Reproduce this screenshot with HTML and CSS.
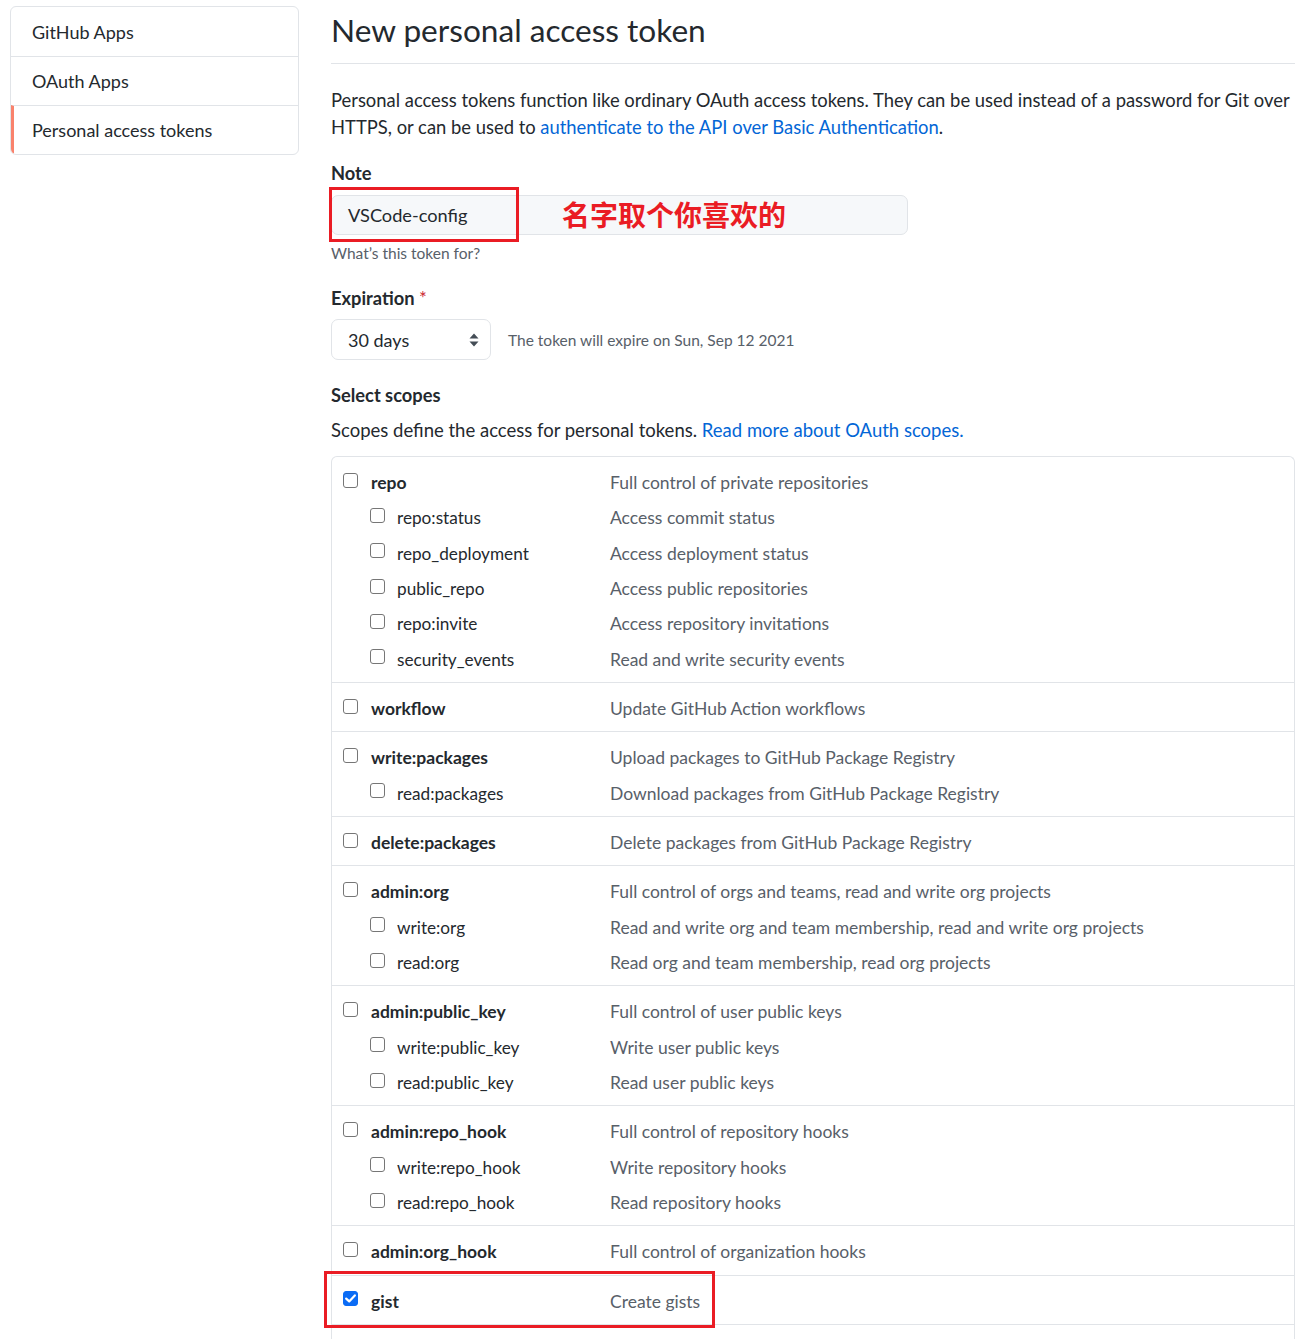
FILE: index.html
```html
<!DOCTYPE html>
<html lang="en">
<head>
<meta charset="utf-8">
<title>New personal access token</title>
<link rel="stylesheet" href="styles.css">
</head>
<body>
<div class="page">
  <nav class="sidebar">
    <a class="side-item">GitHub Apps</a>
    <a class="side-item">OAuth Apps</a>
    <a class="side-item active">Personal access tokens</a>
  </nav>
  <main class="main">
    <div class="subhead"><h2 class="title">New personal access token</h2></div>
    <p class="intro">Personal access tokens function like ordinary OAuth access tokens. They can be used instead of a password for Git over HTTPS, or can be used to <a class="link">authenticate to the API over Basic Authentication</a>.</p>

    <div class="field">
      <div class="label">Note</div>
      <div class="note-wrap">
        <div class="input">VSCode-config</div>
        <div class="annot-box"></div>
        <div class="annot-text">名字取个你喜欢的</div>
      </div>
      <div class="hint">What’s this token for?</div>
    </div>

    <div class="field">
      <div class="label">Expiration <span class="req">*</span></div>
      <div class="exp-row">
        <div class="select">30 days
          <svg class="arrows" width="10" height="14" viewBox="0 0 10 14"><path d="M5 0.5 L9.5 5.5 H0.5 Z M5 13.5 L9.5 8.5 H0.5 Z" fill="#444d56"/></svg>
        </div>
        <div class="exp-note">The token will expire on Sun, Sep 12 2021</div>
      </div>
    </div>

    <div class="label scopes-label">Select scopes</div>
    <p class="scopes-desc">Scopes define the access for personal tokens. <a class="link">Read more about OAuth scopes.</a></p>

    <div class="scopes">
      <div class="group">
        <div class="row"><span class="cb"></span><span class="name">repo</span><span class="desc">Full control of private repositories</span></div>
        <div class="row sub"><span class="cb"></span><span class="sname">repo:status</span><span class="desc">Access commit status</span></div>
        <div class="row sub"><span class="cb"></span><span class="sname">repo_deployment</span><span class="desc">Access deployment status</span></div>
        <div class="row sub"><span class="cb"></span><span class="sname">public_repo</span><span class="desc">Access public repositories</span></div>
        <div class="row sub"><span class="cb"></span><span class="sname">repo:invite</span><span class="desc">Access repository invitations</span></div>
        <div class="row sub"><span class="cb"></span><span class="sname">security_events</span><span class="desc">Read and write security events</span></div>
      </div>
      <div class="group">
        <div class="row"><span class="cb"></span><span class="name">workflow</span><span class="desc">Update GitHub Action workflows</span></div>
      </div>
      <div class="group">
        <div class="row"><span class="cb"></span><span class="name">write:packages</span><span class="desc">Upload packages to GitHub Package Registry</span></div>
        <div class="row sub"><span class="cb"></span><span class="sname">read:packages</span><span class="desc">Download packages from GitHub Package Registry</span></div>
      </div>
      <div class="group">
        <div class="row"><span class="cb"></span><span class="name">delete:packages</span><span class="desc">Delete packages from GitHub Package Registry</span></div>
      </div>
      <div class="group">
        <div class="row"><span class="cb"></span><span class="name">admin:org</span><span class="desc">Full control of orgs and teams, read and write org projects</span></div>
        <div class="row sub"><span class="cb"></span><span class="sname">write:org</span><span class="desc">Read and write org and team membership, read and write org projects</span></div>
        <div class="row sub"><span class="cb"></span><span class="sname">read:org</span><span class="desc">Read org and team membership, read org projects</span></div>
      </div>
      <div class="group">
        <div class="row"><span class="cb"></span><span class="name">admin:public_key</span><span class="desc">Full control of user public keys</span></div>
        <div class="row sub"><span class="cb"></span><span class="sname">write:public_key</span><span class="desc">Write user public keys</span></div>
        <div class="row sub"><span class="cb"></span><span class="sname">read:public_key</span><span class="desc">Read user public keys</span></div>
      </div>
      <div class="group">
        <div class="row"><span class="cb"></span><span class="name">admin:repo_hook</span><span class="desc">Full control of repository hooks</span></div>
        <div class="row sub"><span class="cb"></span><span class="sname">write:repo_hook</span><span class="desc">Write repository hooks</span></div>
        <div class="row sub"><span class="cb"></span><span class="sname">read:repo_hook</span><span class="desc">Read repository hooks</span></div>
      </div>
      <div class="group">
        <div class="row"><span class="cb"></span><span class="name">admin:org_hook</span><span class="desc">Full control of organization hooks</span></div>
      </div>
      <div class="group gist">
        <div class="row"><span class="cb checked"><svg width="11" height="9" viewBox="0 0 11 9"><path d="M1.2 4.6 L4.2 7.4 L9.8 1.4" fill="none" stroke="#fff" stroke-width="2.2" stroke-linecap="round" stroke-linejoin="round"/></svg></span><span class="name">gist</span><span class="desc">Create gists</span></div>
        <div class="annot-box gist-box"></div>
      </div>
      <div class="tail"></div>
    </div>
  </main>
</div>
</body>
</html>
```

FILE: styles.css
```css
* { box-sizing: border-box; }
body {
  margin: 0;
  font-family: "Lato", "Noto Sans", "Liberation Sans", sans-serif;
  font-size: 17.5px;
  color: #24292e;
  background: #fff;
}
.page {
  display: flex;
  align-items: flex-start;
  padding: 6px 0 0 10px;
}
.sidebar {
  width: 289px;
  flex: none;
  border: 1px solid #e1e4e8;
  border-radius: 6px;
  overflow: hidden;
  display: flex;
  flex-direction: column;
}
.side-item {
  height: 49px;
  display: flex;
  align-items: center;
  padding-left: 21px;
  color: #24292e;
  font-size: 18px;
  border-top: 1px solid #e1e4e8;
}
.side-item:first-child { border-top: none; }
.side-item.active {
  border-left: 3px solid #f9826c;
  padding-left: 18px;
}
.main {
  margin-left: 32px;
  width: 964px;
  flex: none;
}
.subhead {
  border-bottom: 1px solid #e1e4e8;
  padding: 5px 0 14px;
}
.title {
  margin: 0;
  font-size: 31.6px;
  font-weight: 400;
  line-height: 38px;
}
.intro {
  margin: 23px 0 0;
  line-height: 27px;
  font-size: 18.4px;
}
.link { color: #0366d6; text-decoration: none; }
.field { margin-top: 20px; }
.label {
  font-weight: 700;
  font-size: 18.3px;
  line-height: 24px;
}
.req { color: #cb2431; font-weight: 400; }
.note-wrap {
  position: relative;
  margin-top: 10px;
  width: 577px;
}
.input {
  height: 40px;
  background: #f6f8fa;
  border: 1px solid #e1e4e8;
  border-radius: 7px;
  padding: 0 16px;
  display: flex;
  align-items: center;
  font-size: 18.2px;
}
.annot-box {
  position: absolute;
  border: 3px solid #ea1c24;
}
.note-wrap .annot-box {
  left: -2px;
  top: -8px;
  width: 190px;
  height: 55px;
}
.annot-text {
  position: absolute;
  left: 231px;
  top: -1px;
  height: 40px;
  display: flex;
  align-items: center;
  font-family: "Noto Sans CJK SC", sans-serif;
  font-weight: 700;
  font-size: 28px;
  color: #ea1c24;
}
.hint {
  margin-top: 8px;
  font-size: 15.5px;
  color: #586069;
  line-height: 20px;
}
.field + .field { margin-top: 23px; }
.exp-row {
  display: flex;
  align-items: center;
  margin-top: 9px;
  gap: 17px;
}
.select {
  width: 160px;
  height: 41px;
  border: 1px solid #e1e4e8;
  border-radius: 7px;
  display: flex;
  align-items: center;
  justify-content: space-between;
  padding: 0 11px 0 16px;
  font-size: 18px;
}
.exp-note {
  font-size: 15.5px;
  color: #586069;
}
.scopes-label { margin-top: 23px; }
.scopes-desc {
  margin: 11px 0 0;
  line-height: 24px;
  font-size: 18.5px;
}
.scopes {
  margin-top: 14px;
  border: 1px solid #e1e4e8;
  border-bottom: none;
  border-radius: 6px 6px 0 0;
}
.group {
  position: relative;
  padding: 8px 0 5px;
  border-bottom: 1px solid #e1e4e8;
}
.row {
  display: grid;
  grid-template-columns: 15px 252px 1fr;
  align-items: center;
  height: 35.33px;
  padding-left: 11px;
}
.row .cb { margin-top: -5px; }
.name {
  font-weight: 700;
  padding-left: 13px;
}
.sub { grid-template-columns: 27px 15px 225px 1fr; }
.sub .cb { grid-column: 2; }
.sname { padding-left: 12px; font-size: 17.2px; }
.desc { color: #586069; }
.cb {
  width: 15px;
  height: 15px;
  border: 1.5px solid #767676;
  border-radius: 3px;
  background: #fff;
  display: flex;
  align-items: center;
  justify-content: center;
}
.cb.checked {
  background: #0b6cf5;
  border-color: #0b6cf5;
}
.gist-box {
  left: -8px;
  top: -5px;
  width: 391px;
  height: 57px;
}
.tail { height: 30px; }
```
